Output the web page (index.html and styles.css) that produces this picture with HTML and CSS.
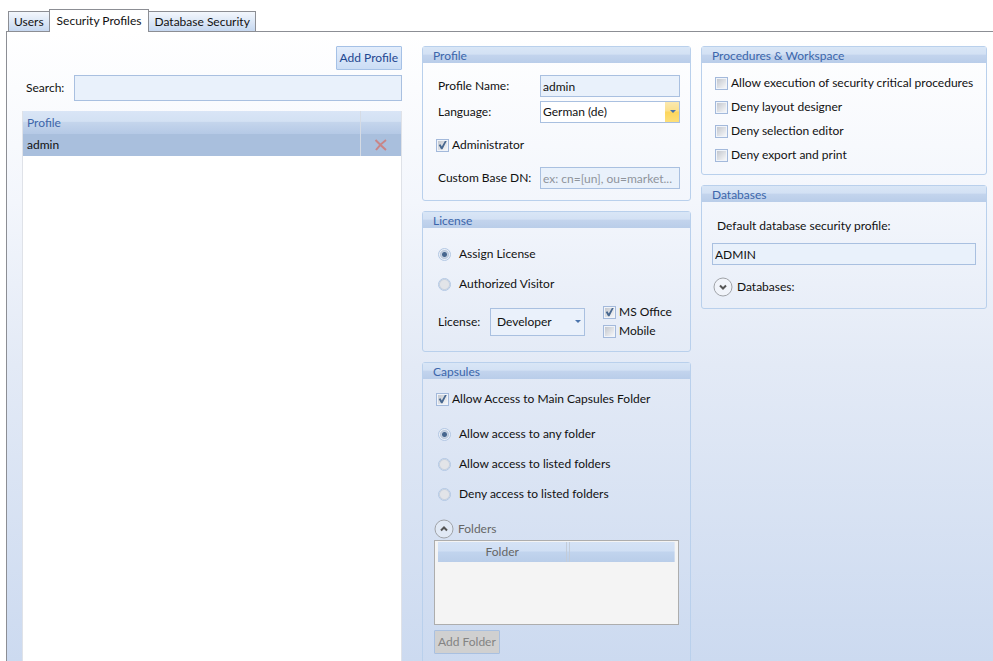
FILE: index.html
```
<!DOCTYPE html>
<html lang="en">
<head>
  <meta charset="UTF-8">
  <title>Security Profiles</title>
  <link rel="stylesheet" href="styles.css">
</head>
<body>
  <nav class="tabs">
    <button type="button" class="tab">Users</button>
    <button type="button" class="tab active">Security Profiles</button>
    <button type="button" class="tab">Database Security</button>
  </nav>

  <main class="page">
    <section class="column profiles">
      <button type="button" class="btn add-profile">Add Profile</button>
      <div class="search">
        <label for="search">Search:</label>
        <input type="text" id="search">
      </div>
      <div class="list">
        <table class="profile-table">
          <thead>
            <tr>
              <th>Profile</th>
              <th class="action"></th>
            </tr>
          </thead>
          <tbody>
            <tr>
              <td>admin</td>
              <td class="action">
                <button type="button" class="delete" aria-label="Delete">
                  <svg width="14" height="12" viewBox="0 0 14 12">
                    <path d="M1.5 1C4 3.500 8 7.500 12 11M12 1C8.500 3.500 4.500 7.500 2 11" fill="none" stroke="#c98587" stroke-width="2"/>
                  </svg>
                </button>
              </td>
            </tr>
          </tbody>
        </table>
      </div>
    </section>

    <section class="column settings">
      <div class="group">
        <h2>Profile</h2>
        <div class="group-body profile-form">
          <div class="field">
            <label for="name">Profile Name:</label>
            <input type="text" id="name" value="admin">
          </div>
          <div class="field">
            <label for="language">Language:</label>
            <div class="select language">
              <select id="language">
                <option>German (de)</option>
                <option>English (en)</option>
              </select>
            </div>
          </div>
          <label class="check"><input type="checkbox" checked>Administrator</label>
          <div class="field">
            <label for="base-dn">Custom Base DN:</label>
            <input type="text" id="base-dn" placeholder="ex: cn=[un], ou=market...">
          </div>
        </div>
      </div>

      <div class="group">
        <h2>License</h2>
        <div class="group-body license-form">
          <label class="radio"><input type="radio" name="license-mode" checked>Assign License</label>
          <label class="radio"><input type="radio" name="license-mode">Authorized Visitor</label>
          <div class="license-row">
            <label for="license">License:</label>
            <div class="select license">
              <select id="license">
                <option>Developer</option>
                <option>User</option>
              </select>
            </div>
            <div class="license-options">
              <label class="check"><input type="checkbox" checked>MS Office</label>
              <label class="check"><input type="checkbox">Mobile</label>
            </div>
          </div>
        </div>
      </div>

      <div class="group">
        <h2>Capsules</h2>
        <div class="group-body capsules-form">
          <label class="check"><input type="checkbox" checked>Allow Access to Main Capsules Folder</label>
          <div class="access">
            <label class="radio"><input type="radio" name="access" checked>Allow access to any folder</label>
            <label class="radio"><input type="radio" name="access">Allow access to listed folders</label>
            <label class="radio"><input type="radio" name="access">Deny access to listed folders</label>
          </div>
          <button type="button" class="expander disabled">
            <svg width="20" height="20" viewBox="0 0 20 20">
              <circle cx="10" cy="10" r="9" fill="#e1e9f5" stroke="#a0a3a8"/>
              <path d="M7 11.500L10 8.500L13 11.500" fill="none" stroke="#555" stroke-width="2"/>
            </svg>
            Folders
          </button>
          <div class="folder-box">
            <table class="folder-table">
              <thead>
                <tr>
                  <th>Folder</th>
                  <th class="rest"></th>
                </tr>
              </thead>
            </table>
          </div>
          <button type="button" class="btn" disabled>Add Folder</button>
        </div>
      </div>
    </section>

    <section class="column rights">
      <div class="group">
        <h2>Procedures &amp; Workspace</h2>
        <div class="group-body procedures">
          <label class="check"><input type="checkbox">Allow execution of security critical procedures</label>
          <label class="check"><input type="checkbox">Deny layout designer</label>
          <label class="check"><input type="checkbox">Deny selection editor</label>
          <label class="check"><input type="checkbox">Deny export and print</label>
        </div>
      </div>

      <div class="group">
        <h2>Databases</h2>
        <div class="group-body databases">
          <label for="default-profile">Default database security profile:</label>
          <input type="text" id="default-profile" value="ADMIN">
          <button type="button" class="expander">
            <svg width="20" height="20" viewBox="0 0 20 20">
              <circle cx="10" cy="10" r="9" fill="#f1f4fa" stroke="#a0a3a8"/>
              <path d="M7 8.500L10 11.500L13 8.500" fill="none" stroke="#555" stroke-width="2"/>
            </svg>
            Databases:
          </button>
        </div>
      </div>
    </section>
  </main>
</body>
</html>
```
FILE: styles.css
```
* {
  box-sizing: border-box;
}
body {
  display: flex;
  flex-direction: column;
  height: 100vh;
  margin: 0;
  padding: 9px 0 0 6px;
  overflow: hidden;
  font-family: Lato, sans-serif;
  font-size: 12px;
  line-height: 16px;
  color: #111;
  background: #fff;
}
button, input, select {
  margin: 0;
  font: inherit;
  color: inherit;
}

/* tabs */
.tabs {
  display: flex;
  align-items: flex-end;
  padding-left: 2px;
}
.tab {
  height: 20px;
  padding: 0 5px;
  border: 1px solid #8c8e94;
  border-bottom: none;
  background: linear-gradient(#f3f7fd, #c6d8f0);
}
.tab + .tab {
  border-left: none;
}
.tab.active {
  z-index: 1;
  height: 23px;
  margin-bottom: -1px;
  padding: 0 7px;
  border-left: 1px solid #8c8e94;
  margin-left: -1px;
  background: #fff;
}
.page {
  display: grid;
  flex: 1;
  grid-template-columns: 380fr 20px 269fr 10px 286fr;
  min-height: 0;
  padding: 14px 6px 0 15px;
  overflow: hidden;
  border-top: 1px solid #8c8e94;
  border-left: 1px solid #8c8e94;
  background: linear-gradient(#fff, #f3f6fc 27%, #e3eaf6 53%, #ccdaf0);
}
.column {
  display: flex;
  flex-direction: column;
  gap: 10px;
  min-width: 0;
}
.settings {
  grid-column: 3;
}
.rights {
  grid-column: 5;
}

/* text boxes and buttons */
input[type="text"] {
  min-width: 0;
  height: 22px;
  padding: 0 2px;
  border: 1px solid #a9c0e0;
  background: #e9f1fb;
}
input::placeholder {
  color: #8f949b;
}
.btn {
  align-self: flex-start;
  height: 24px;
  padding: 0 3px;
  border: 1px solid #a5c1e6;
  border-radius: 1px;
  color: #1f4790;
  background: linear-gradient(#e3edfb, #cbddf5);
}
.btn:disabled {
  color: #838383;
  border-color: #a9c0e0;
  background: #d0d0d0;
}

/* profile list */
.profiles {
  gap: 0;
}
.add-profile {
  align-self: flex-end;
}
.search {
  display: flex;
  align-items: center;
  gap: 10px;
  margin: 5px 0 10px;
  padding-left: 4px;
}
.search input[type="text"] {
  flex: 1;
  height: 26px;
}
.list {
  flex: 1;
  border-right: 1px solid #dfe2e8;
  border-left: 1px solid #dfe2e8;
  background: #fff;
}
table {
  width: 100%;
  border-collapse: collapse;
}
th, td {
  height: 22px;
  padding: 0 4px;
  font-weight: normal;
  text-align: left;
}
.profile-table th {
  height: 23px;
  color: #3e66aa;
}
.profile-table thead {
  background: linear-gradient(#d9e5f6, #d3e1f3 45%, #c4d5ec 50%, #b5c9e6);
}
.profile-table tbody {
  background: #a9bfdd;
}
.profile-table .action {
  width: 41px;
  border-left: 1px solid #d5dbe4;
  text-align: center;
}
.delete {
  display: block;
  margin: auto;
  padding: 0;
  border: none;
  background: none;
}
.delete svg {
  display: block;
}

/* group boxes */
.group {
  border: 1px solid #b9d0ec;
  border-radius: 3px;
}
.group h2 {
  height: 16px;
  margin: 0;
  padding-left: 10px;
  font-size: 12px;
  font-weight: normal;
  line-height: 17px;
  color: #3b66ab;
  background: linear-gradient(#d9e6f6, #d3e1f4 45%, #c3d4ed 50%, #b9cde9);
}
.group-body {
  display: flex;
  flex-direction: column;
}
.field {
  display: flex;
  align-items: center;
  padding-left: 5px;
}
.field label {
  flex: 1;
  white-space: nowrap;
}
.field input[type="text"], .field .select {
  width: 140px;
}
.profile-form {
  gap: 4px;
  padding: 12px 10px 11px;
}
.profile-form .check {
  margin: 10px 0;
  padding-left: 3px;
}
.select {
  position: relative;
}
.select select {
  appearance: none;
  display: block;
  width: 100%;
  height: 100%;
  padding: 0 2px;
  border: 1px solid #a9c0e0;
  border-radius: 0;
  background: #fff;
}
.select::after {
  content: "";
  position: absolute;
  top: 50%;
  right: 4px;
  margin-top: -2px;
  border: 3px solid transparent;
  border-top-color: #4a74ac;
  border-bottom: none;
  pointer-events: none;
}
.select.language {
  height: 22px;
}
.select.language select {
  background: linear-gradient(#fbe9b0, #fbe08c 45%, #fdd65c 50%, #fde07a) right / 14px 100% no-repeat #fff;
}
.select.license {
  width: 95px;
  height: 28px;
}
.select.license select {
  padding: 0 6px;
  background: #eaf1fb;
}

/* check boxes and radio buttons */
.check {
  display: flex;
  align-items: center;
  gap: 3px;
  white-space: nowrap;
}
.check input {
  appearance: none;
  position: relative;
  flex: none;
  width: 13px;
  height: 13px;
  border: 1px solid #a3b9db;
  background: linear-gradient(135deg, #c3c7ce, #f6f7f9) center / 9px 9px no-repeat #f0f4fa;
}
.check input:checked::after {
  content: "";
  position: absolute;
  inset: 1px;
  background: #47678f;
  clip-path: polygon(8% 50%, 28% 42%, 42% 66%, 78% 4%, 98% 4%, 50% 98%, 34% 98%);
}
.radio {
  display: flex;
  align-items: center;
  gap: 8px;
  height: 30px;
}
.radio input {
  appearance: none;
  flex: none;
  width: 13px;
  height: 13px;
  border: 1px solid #b3c8e4;
  border-radius: 50%;
  background: radial-gradient(#e2e4e8 4px, #c9d2df 5px, #eaf0f8 6px);
}
.radio input:checked {
  background: radial-gradient(#47678f 2px, #c8d3e2 3px, #b9c7db 4px, #eaf0f8 5px);
}

/* license */
.license-form {
  padding: 11px 10px 12px 15px;
}
.license-row {
  display: flex;
  align-items: center;
  margin-top: 5px;
}
.license-row > label {
  width: 52px;
}
.license-options {
  display: flex;
  flex-direction: column;
  gap: 3px;
  margin-left: 18px;
}

/* capsules */
.capsules-form {
  padding: 12px 11px;
}
.capsules-form > .check {
  padding-left: 2px;
}
.access {
  margin: 12px 0 10px;
  padding-left: 4px;
}
.expander {
  display: flex;
  align-items: center;
  gap: 4px;
  padding: 0;
  border: none;
  background: none;
}
.expander.disabled {
  color: #666;
}
.folder-box {
  height: 85px;
  margin: 1px 0 5px;
  padding: 1px 3px;
  border: 1px solid #adadad;
  background: #f4f4f4;
}
.folder-table th {
  height: 20px;
  padding: 0;
  color: #666;
  text-align: center;
}
.folder-table thead {
  background: linear-gradient(#d5e3f6, #d0dff4 45%, #c1d4ee 50%, #b9cde9);
}
.folder-table .rest {
  width: 45%;
  border-left: 4px double #c3ccd9;
}

/* procedures and databases */
.procedures {
  gap: 8px;
  padding: 12px 13px 11px;
}
.databases {
  padding: 16px 10px 11px;
}
.databases label {
  padding-left: 5px;
}
.databases input[type="text"] {
  margin: 9px 0 12px;
}
.databases .expander {
  padding-left: 1px;
}
```
